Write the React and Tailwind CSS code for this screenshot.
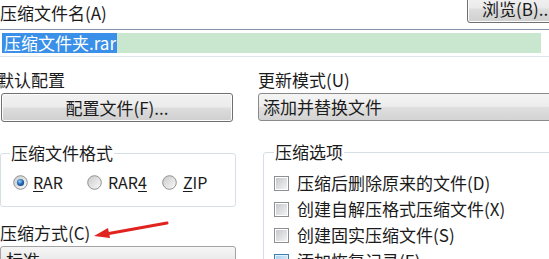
import React from "react";

const btn =
  "border border-[#707070] rounded-[3px] bg-[linear-gradient(#f2f2f2_0%,#ebebeb_48%,#dddddd_52%,#cfcfcf_100%)] shadow-[inset_0_0_0_1px_#fcfcfc]";

function Radio({ checked }) {
  return (
    <svg width="15" height="15" viewBox="0 0 15 15" className="shrink-0">
      <defs>
        <linearGradient id="rg" x1="0" y1="0" x2="1" y2="1">
          <stop offset="0" stopColor="#c9c9c9" />
          <stop offset="1" stopColor="#fbfbfb" />
        </linearGradient>
        <radialGradient id="rd" cx="0.4" cy="0.35" r="0.7">
          <stop offset="0" stopColor="#9fd0f4" />
          <stop offset="0.5" stopColor="#2b76c4" />
          <stop offset="1" stopColor="#163e78" />
        </radialGradient>
      </defs>
      <circle cx="7.5" cy="7.5" r="6.8" fill="url(#rg)" stroke="#8e9092" strokeWidth="1" />
      {checked && <circle cx="7.5" cy="7.5" r="3.6" fill="url(#rd)" />}
    </svg>
  );
}

function Check({ hot }) {
  return (
    <span
      className={
        "shrink-0 w-[15px] h-[15px] border flex items-center justify-center " +
        (hot ? "border-[#3c7fb1] bg-[#e3f1fb]" : "border-[#8f8f8f] bg-white")
      }
    >
      <span
        className={
          "w-[11px] h-[11px] " +
          (hot
            ? "bg-[linear-gradient(135deg,#a9d2f0,#e9f5fd)]"
            : "bg-[linear-gradient(135deg,#c5c8cc,#f3f3f3)]")
        }
      />
    </span>
  );
}

export default function App() {
  return (
    <div className="relative w-[549px] h-[259px] overflow-hidden bg-white text-[#1b1b1b] text-[17px] font-['Noto_Sans_CJK_SC','Noto_Sans',sans-serif]">
      {/* file name row */}
      <div className="flex items-start justify-between h-[29px]">
        <div className="pt-[3px] leading-[20px]">压缩文件名(A)</div>
        <div className={"-mt-[6px] -mr-[14px] w-[96px] h-[29px] pl-[14px] pt-[4px] leading-[20px] " + btn}>
          浏览(B)...
        </div>
      </div>

      <div className="h-[28px] border-t border-[#8496ad] border-b border-b-[#dfe6ee] flex items-center">
        <span className="ml-[2px] h-[20px] leading-[20px] pl-[2px] pr-[1px] bg-[#3a8fe8] text-white">
          压缩文件夹.rar
        </span>
        <span className="h-[20px] flex-1 mr-[8px] bg-[#c9e7cf]" />
      </div>

      <div className="grid grid-cols-[236px_1fr] gap-x-[22px]">
        {/* left column */}
        <div className="flex flex-col">
          <div className="mt-[13px] -ml-[3px] leading-[20px]">默认配置</div>
          <div className={"mt-[3px] ml-[1px] w-[232px] h-[29px] flex items-center justify-center leading-[20px] " + btn}>
            配置文件(F)...
          </div>

          <fieldset className="mt-[21px] border border-[#d5dfe5] rounded-[3px] pl-[9px] pb-[14px]">
            <legend className="px-[1px] leading-[20px]">压缩文件格式</legend>
            <div className="mt-[9px] h-[20px] flex items-center text-[16px]">
              <div className="ml-[3px] flex items-center gap-[5px]">
                <Radio checked />
                <span>
                  <span className="underline underline-offset-2">R</span>AR
                </span>
              </div>
              <div className="ml-[24px] flex items-center gap-[6px]">
                <Radio />
                <span>
                  RAR<span className="underline underline-offset-2">4</span>
                </span>
              </div>
              <div className="ml-[15px] flex items-center gap-[6px]">
                <Radio />
                <span>
                  <span className="underline underline-offset-2">Z</span>IP
                </span>
              </div>
            </div>
          </fieldset>

          <div className="mt-[16px] leading-[20px]">压缩方式(C)</div>
          <div className="mt-[3px] h-[28px] border border-[#a3a3a3] rounded-[3px] bg-[linear-gradient(#f6f6f6,#dedede)] pl-[5px] pt-[3px] leading-[20px]">
            标准
          </div>
        </div>

        {/* right column */}
        <div className="flex flex-col">
          <div className="mt-[13px] leading-[20px]">更新模式(U)</div>
          <div className="mt-[3px] -mr-[20px] h-[28px] border border-[#8a8a8a] rounded-[3px] bg-[linear-gradient(#f5f5f5_0%,#ececec_48%,#dfdfdf_52%,#d3d3d3_100%)] pl-[4px] flex items-center leading-[20px]">
            添加并替换文件
          </div>

          <fieldset className="mt-[21px] ml-[5px] -mr-[20px] border border-[#d5dfe5] rounded-[3px] pl-[10px]">
            <legend className="px-[1px] leading-[20px]">压缩选项</legend>
            <div className="mt-[8px] flex flex-col">
              {[
                "压缩后删除原来的文件(D)",
                "创建自解压格式压缩文件(X)",
                "创建固实压缩文件(S)",
                "添加恢复记录(E)",
              ].map((t, i) => (
                <div key={t} className="h-[26px] flex items-center gap-[8px] leading-[20px]">
                  <Check hot={i === 3} />
                  <span>{t}</span>
                </div>
              ))}
            </div>
          </fieldset>
        </div>
      </div>

      {/* red annotation arrow */}
      <svg className="absolute left-[90px] top-[218px]" width="82" height="24" viewBox="0 0 82 24">
        <path d="M77 5 L16 16" stroke="#e0231f" strokeWidth="3" strokeLinecap="round" />
        <path d="M4 18 L18 10 L20 20 Z" fill="#e0231f" />
      </svg>
    </div>
  );
}
